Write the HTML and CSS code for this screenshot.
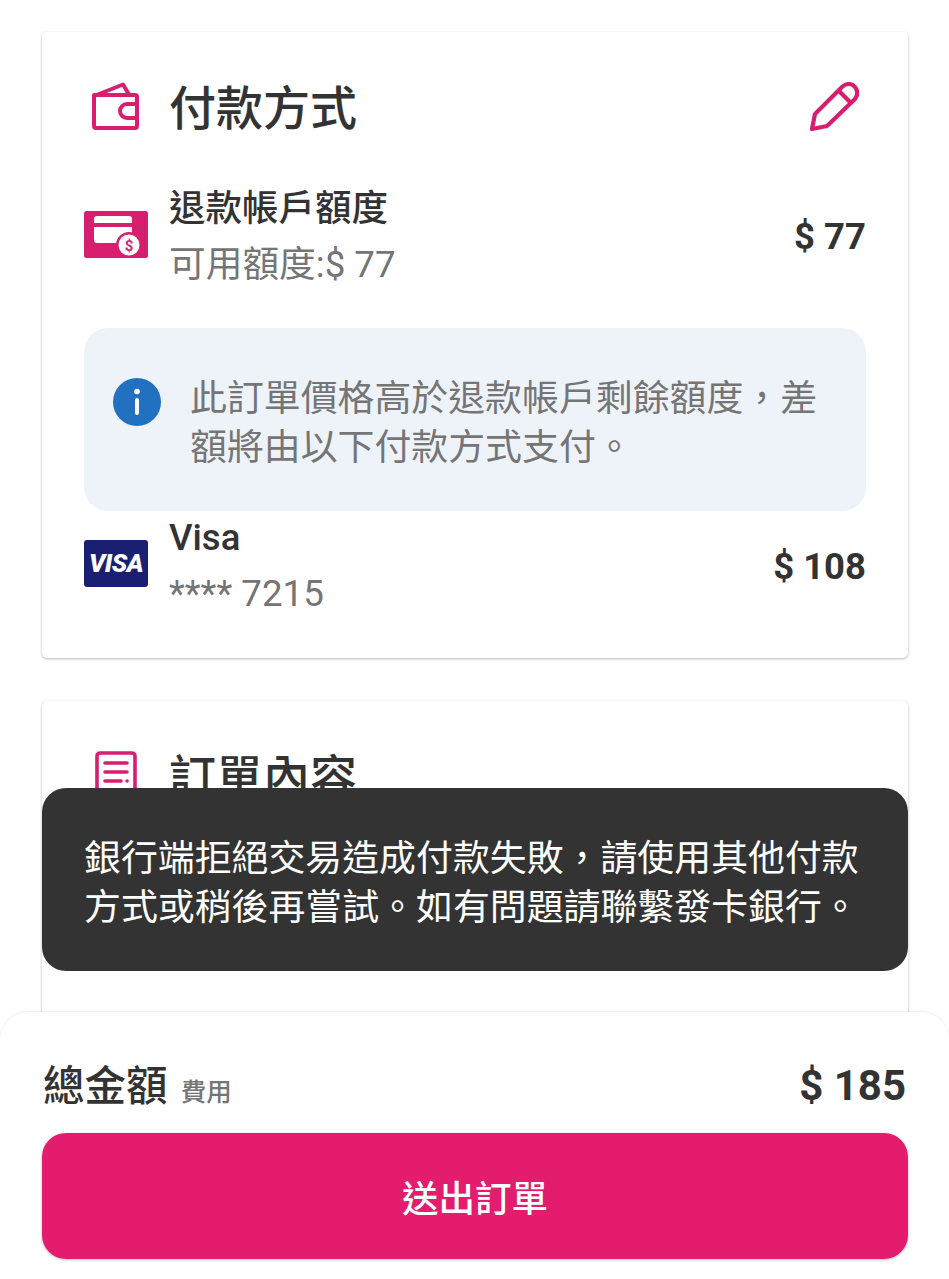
FILE: index.html
```html
<!DOCTYPE html>
<html lang="zh-Hant">
<head>
    <meta charset="UTF-8">
    <meta name="viewport" content="width=device-width, initial-scale=1.0">
    <title>付款方式</title>
    <link rel="stylesheet" href="styles.css">
</head>
<body>
    <main class="page">
        <section class="card">
            <div class="card-header">
                <div class="icon-box">
                    <svg width="50" height="50" viewBox="0 0 50 50" fill="none" stroke="#d81f6f" stroke-width="4" stroke-linejoin="round" stroke-linecap="round">
                        <path d="M3 13h41a2 2 0 0 1 2 2v29a2 2 0 0 1-2 2H5a2 2 0 0 1-2-2V13z"/>
                        <path d="M3 14 L32 2.500 L38 12.500"/>
                        <path d="M46 22H36a6.500 6.500 0 0 0 0 14h10"/>
                    </svg>
                </div>
                <h2 class="card-title">付款方式</h2>
                <svg class="edit-icon" width="50" height="50" viewBox="0 0 50 50" fill="none" stroke="#d81f6f" stroke-width="4.200" stroke-linejoin="round">
                    <path d="M3 47 L6 32 L33 5 C37 1 43 1 46 5 C49 9 49 13 46 17 L18 44 Z"/>
                    <path d="M30 9 L42 21"/>
                </svg>
            </div>

            <div class="pay-row refund-row">
                <div class="pay-logo">
                    <svg width="64" height="47" viewBox="0 0 64 47">
                        <rect width="64" height="47" rx="2.500" fill="#d81f6f"/>
                        <rect x="10" y="5" width="38" height="27" rx="3" fill="#fff"/>
                        <rect x="10" y="12" width="38" height="4" fill="#d81f6f"/>
                        <circle cx="45" cy="34" r="13" fill="#d81f6f"/>
                        <circle cx="45" cy="34" r="10.500" fill="#fff"/>
                        <text x="45" y="39.500" text-anchor="middle" class="coin-text">$</text>
                    </svg>
                </div>
                <div class="pay-text">
                    <div class="pay-name">退款帳戶額度</div>
                    <div class="pay-sub">可用額度:$ 77</div>
                </div>
                <div class="pay-amount">$ 77</div>
            </div>

            <div class="info-box">
                <svg class="info-icon" width="48" height="48" viewBox="0 0 48 48">
                    <circle cx="24" cy="24" r="24" fill="#2270c0"/>
                    <circle cx="24" cy="13.500" r="2.800" fill="#fff"/>
                    <rect x="22" y="20" width="4" height="17" rx="2" fill="#fff"/>
                </svg>
                <p class="info-text">此訂單價格高於退款帳戶剩餘額度，差額將由以下付款方式支付。</p>
            </div>

            <div class="pay-row visa-row">
                <div class="pay-logo">
                    <div class="visa-logo">VISA</div>
                </div>
                <div class="pay-text">
                    <div class="pay-name">Visa</div>
                    <div class="pay-sub">**** 7215</div>
                </div>
                <div class="pay-amount">$ 108</div>
            </div>
        </section>

        <section class="card card-second">
            <div class="card-header">
                <div class="icon-box">
                    <svg width="42" height="50" viewBox="0 0 42 50" fill="none" stroke="#d81f6f" stroke-width="3.600" stroke-linejoin="round" stroke-linecap="round">
                        <rect x="2" y="2" width="38" height="46" rx="3"/>
                        <path d="M10 12h22M10 21h22M10 30h16M32 30h.1"/>
                    </svg>
                </div>
                <h2 class="card-title">訂單內容</h2>
            </div>
        </section>
    </main>

    <div class="toast">銀行端拒絕交易造成付款失敗，請使用其他付款方式或稍後再嘗試。如有問題請聯繫發卡銀行。</div>

    <footer class="checkout">
        <div class="total-row">
            <div class="total-label">總金額 <span class="total-note">費用</span></div>
            <div class="total-amount">$ 185</div>
        </div>
        <button class="submit-btn">送出訂單</button>
    </footer>
</body>
</html>
```

FILE: styles.css
```css
* {
    box-sizing: border-box;
}
html, body {
    height: 1279px;
}
body {
    margin: 0;
    position: relative;
    overflow: hidden;
    background-color: #fff;
    color: #333;
    font-family: Roboto, "Noto Sans CJK TC", sans-serif;
}
.page {
    padding: 32px 41px 0 42px;
}
.card {
    padding: 45px 42px 39px;
    background-color: #fff;
    border-radius: 5px;
    box-shadow: 0 1px 3px rgba(0, 0, 0, 0.28);
}
.card-second {
    margin-top: 43px;
    height: 570px;
    padding-top: 45px;
}
.card-header {
    display: flex;
    align-items: center;
    height: 64px;
}
.icon-box {
    width: 64px;
    flex: none;
    display: flex;
    justify-content: center;
    margin-top: -4px;
    margin-right: 21px;
}
.card-title {
    flex: 1;
    margin: 0;
    font-size: 47px;
    font-weight: 500;
    line-height: 64px;
}
.edit-icon {
    margin-top: -4px;
    margin-right: 7px;
}
.pay-row {
    display: flex;
    align-items: center;
}
.refund-row {
    margin-top: 43px;
}
.refund-row .pay-amount {
    margin-bottom: 2px;
}
.visa-row {
    margin-top: 2px;
}
.pay-logo {
    width: 64px;
    flex: none;
    margin-right: 21px;
    margin-top: -5px;
    line-height: 0;
}
.pay-text {
    flex: 1;
}
.pay-name {
    font-size: 36.5px;
    font-weight: 500;
    line-height: 50px;
}
.pay-sub {
    margin-top: 6px;
    font-size: 36.7px;
    line-height: 50px;
    color: #757575;
}
.pay-amount {
    font-size: 36.5px;
    font-weight: 700;
}
.coin-text {
    font-family: Roboto, sans-serif;
    font-size: 15px;
    font-weight: 700;
    fill: #d81f6f;
}
.visa-logo {
    height: 47px;
    background-color: #1a1f71;
    border-radius: 3px;
    color: #fff;
    font-size: 25.5px;
    font-weight: 900;
    font-style: italic;
    letter-spacing: -0.5px;
    line-height: 47px;
    text-align: center;
}
.info-box {
    display: flex;
    align-items: flex-start;
    gap: 29px;
    margin-top: 38px;
    padding: 46px 29px 39px;
    background-color: #eef3fa;
    border-radius: 24px;
}
.info-icon {
    flex: none;
    margin-top: 4px;
}
.info-text {
    margin: 0;
    font-size: 36.9px;
    line-height: 49px;
    color: #757575;
}
.toast {
    position: absolute;
    left: 42px;
    top: 788px;
    width: 866px;
    height: 183px;
    padding: 46px 42px;
    background-color: #333;
    border-radius: 24px;
    color: #fff;
    font-size: 36.9px;
    line-height: 49px;
}
.checkout {
    position: absolute;
    left: 0;
    right: 0;
    bottom: 0;
    height: 267px;
    padding: 45px 43px 20px 42px;
    background-color: #fff;
    border-radius: 28px 28px 0 0;
    box-shadow: 0 -1px 2px rgba(0, 0, 0, 0.08);
}
.total-row {
    display: flex;
    justify-content: space-between;
    align-items: center;
    height: 56px;
}
.total-label {
    margin-left: 1px;
    margin-bottom: 4px;
    font-size: 41.5px;
    font-weight: 500;
}
.total-note {
    margin-left: 3px;
    font-size: 25.5px;
    font-weight: 500;
    color: #757575;
}
.total-amount {
    font-size: 42px;
    font-weight: 700;
}
.submit-btn {
    display: block;
    width: calc(100% + 2px);
    height: 126px;
    margin-top: 20px;
    background-color: #e31c6e;
    border: none;
    border-radius: 24px;
    box-shadow: 0 1px 3px rgba(0, 0, 0, 0.25);
    color: #fff;
    font-family: inherit;
    font-size: 36.5px;
    font-weight: 500;
}
```
